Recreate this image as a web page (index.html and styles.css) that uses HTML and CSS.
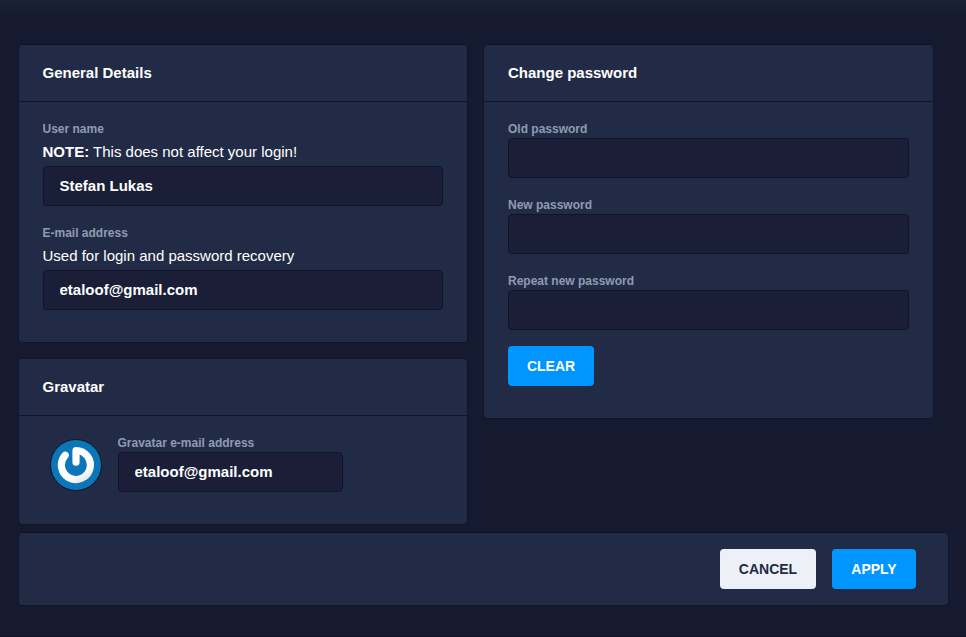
FILE: index.html
```html
<!DOCTYPE html>
<html lang="en">
<head>
<meta charset="utf-8">
<title>Account settings</title>
<link rel="stylesheet" href="styles.css">
</head>
<body>
<main class="page">
  <div class="columns">
    <div class="column column-left">
      <section class="card">
        <header class="card-header">General Details</header>
        <div class="card-body">
          <div class="field">
            <label class="label" for="name">User name</label>
            <p class="hint"><b>NOTE:</b> This does not affect your login!</p>
            <input class="input" id="name" type="text" value="Stefan Lukas">
          </div>
          <div class="field">
            <label class="label" for="email">E-mail address</label>
            <p class="hint">Used for login and password recovery</p>
            <input class="input" id="email" type="text" value="etaloof@gmail.com">
          </div>
        </div>
      </section>
      <section class="card">
        <header class="card-header">Gravatar</header>
        <div class="card-body gravatar">
          <svg class="avatar" viewBox="0 0 52 52">
            <defs>
              <linearGradient id="ring" gradientUnits="userSpaceOnUse" x1="16" y1="8" x2="38" y2="44">
                <stop offset="0" stop-color="#ffffff"/>
                <stop offset="0.7" stop-color="#fbfbfb"/>
                <stop offset="1" stop-color="#dcdfe2"/>
              </linearGradient>
            </defs>
            <circle cx="26" cy="26" r="25.5" fill="#0b76b8" stroke="#101426"/>
            <path d="M15.2 16.2A14.5 14.5 0 1 0 26 11.5V23.2" fill="none" stroke="url(#ring)" stroke-width="7.2" stroke-linecap="round" stroke-linejoin="round"/>
          </svg>
          <div class="field field-small">
            <label class="label" for="gravatar">Gravatar e-mail address</label>
            <input class="input" id="gravatar" type="text" value="etaloof@gmail.com">
          </div>
        </div>
      </section>
    </div>
    <div class="column column-right">
      <section class="card">
        <header class="card-header">Change password</header>
        <div class="card-body">
          <div class="field">
            <label class="label" for="old">Old password</label>
            <input class="input" id="old" type="password">
          </div>
          <div class="field">
            <label class="label" for="new">New password</label>
            <input class="input" id="new" type="password">
          </div>
          <div class="field">
            <label class="label" for="repeat">Repeat new password</label>
            <input class="input" id="repeat" type="password">
          </div>
          <div class="field">
            <button class="button primary clear">CLEAR</button>
          </div>
        </div>
      </section>
    </div>
  </div>
  <footer class="card actions">
    <button class="button basic">CANCEL</button>
    <button class="button primary apply">APPLY</button>
  </footer>
</main>
</body>
</html>
```
FILE: styles.css
```css
* {
  box-sizing: border-box;
}

body {
  margin: 0;
  background: #151a30;
  color: #fff;
  font: 15px/20px "Liberation Sans", Arial, sans-serif;
}

.page {
  height: 637px;
  padding: 44px 17px 0 18px;
  border-bottom: 1px solid #101426;
  background: linear-gradient(#1a2035, #151a30 18px);
}

.columns {
  display: flex;
  align-items: flex-start;
  gap: 15px;
  margin-bottom: 7px;
}

.column {
  display: flex;
  flex-direction: column;
  gap: 15px;
}

.column-left {
  width: 450px;
  text-indent: -0.5px;
}

.column-left .input {
  text-indent: -0.5px;
}

.column-right {
  width: 451px;
}

.card {
  background: #222b45;
  border: 1px solid #101426;
  border-radius: 4px;
}

.card-header {
  height: 57px;
  padding: 16px 24px;
  border-bottom: 1px solid #101426;
  font-weight: bold;
  line-height: 24px;
}

.card-body {
  padding: 16px 24px;
}

.field {
  margin-bottom: 16px;
}

.label {
  display: block;
  height: 20px;
  color: #8f9bb3;
  font-size: 12px;
  font-weight: bold;
  line-height: 22px;
}

.hint {
  margin: 0;
  line-height: 28px;
}

.input {
  display: block;
  width: 100%;
  height: 40px;
  padding: 6px 16px 8px;
  border: 1px solid #101426;
  border-radius: 4px;
  background: #1a1f37;
  color: #fff;
  font: bold 15px/24px "Liberation Sans", Arial, sans-serif;
}

.gravatar {
  display: flex;
  padding-left: 31px;
}

.avatar {
  width: 52px;
  height: 52px;
  margin: 7px 16px 0 0;
}

.field-small {
  width: 225px;
}

.button {
  display: block;
  height: 40px;
  padding: 0;
  border: 0;
  border-radius: 4px;
  font: bold 14px/16px "Liberation Sans", Arial, sans-serif;
}

.primary {
  background: #0095ff;
  color: #fff;
}

.basic {
  width: 96px;
  background: #edf1f7;
  color: #222b45;
}

.clear {
  width: 86px;
}

.apply {
  width: 84px;
}

.actions {
  display: flex;
  justify-content: flex-end;
  gap: 16px;
  height: 74px;
  padding: 16px 32px;
}
```
